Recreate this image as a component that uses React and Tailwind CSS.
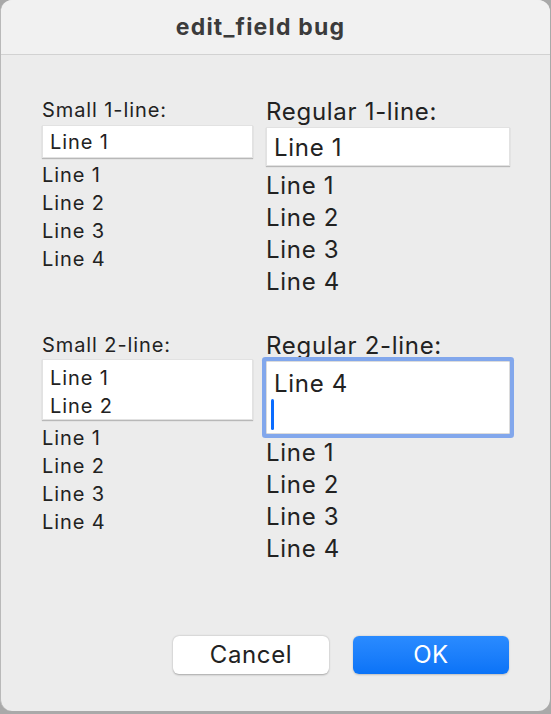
import React from 'react';

const font = { fontFamily: 'Inter, "Noto Sans", sans-serif' };

function SmallLines() {
  return (
    <div className="flex flex-col text-[20px] leading-[28px] tracking-[0.9px] text-[#222]">
      <span>Line 1</span>
      <span>Line 2</span>
      <span>Line 3</span>
      <span>Line 4</span>
    </div>
  );
}

function RegularLines() {
  return (
    <div className="flex flex-col text-[24px] leading-[32px] tracking-[0.7px] text-[#222]">
      <span>Line 1</span>
      <span>Line 2</span>
      <span>Line 3</span>
      <span>Line 4</span>
    </div>
  );
}

export default function App() {
  return (
    <div className="w-[551px] h-[714px] bg-[#a9a9a9]" style={font}>
      <div className="w-[550px] h-[711px] bg-[#ececec] rounded-[12px] border-l border-[#b9b9b9] overflow-hidden flex flex-col">
        {/* title bar */}
        <div className="h-[55px] shrink-0 bg-[#f1f1f1] border-b border-[#d2d2d2] flex items-center justify-center pr-[30px]">
          <span className="text-[23px] font-bold text-[#3b3b3b] tracking-[1.2px]">edit_field bug</span>
        </div>

        <div className="flex flex-col pl-[41px] pt-[41px]">
          {/* top row */}
          <div className="grid grid-cols-[211px_244px] gap-x-[13px] items-start h-[202px]">
            <div className="flex flex-col">
              <span className="text-[20px] leading-[28px] tracking-[0.9px] text-[#222]">Small 1-line:</span>
              <div className="mt-[1px] h-[33px] bg-white border border-[#e2e2e2] shadow-[0_1px_1px_rgba(0,0,0,0.22)] flex items-center pl-[7px] pt-[1px] text-[20px] tracking-[0.9px] text-[#222]">
                Line 1
              </div>
              <div className="mt-[3px]">
                <SmallLines />
              </div>
            </div>
            <div className="flex flex-col mt-[1px]">
              <span className="text-[24px] leading-[30px] tracking-[0.7px] text-[#222]">Regular 1-line:</span>
              <div className="h-[39px] bg-white border border-[#e2e2e2] shadow-[0_1px_1px_rgba(0,0,0,0.22)] flex items-center pl-[7px] pt-[3px] text-[24px] tracking-[0.7px] text-[#222]">
                Line 1
              </div>
              <div className="mt-[4px]">
                <RegularLines />
              </div>
            </div>
          </div>

          {/* bottom row */}
          <div className="grid grid-cols-[211px_244px] gap-x-[13px] items-start mt-[33px] h-[233px]">
            <div className="flex flex-col">
              <span className="text-[20px] leading-[28px] tracking-[0.9px] text-[#222]">Small 2-line:</span>
              <div className="h-[61px] bg-white border border-[#e2e2e2] shadow-[0_1px_1px_rgba(0,0,0,0.22)] flex flex-col pl-[7px] pt-[4px] text-[20px] leading-[28px] tracking-[0.9px] text-[#222]">
                <span>Line 1</span>
                <span>Line 2</span>
              </div>
              <div className="mt-[4px]">
                <SmallLines />
              </div>
            </div>
            <div className="flex flex-col">
              <span className="text-[24px] leading-[30px] tracking-[0.7px] text-[#222]">Regular 2-line:</span>
              <div className="h-[73px] bg-white rounded-[1px] border border-[#dcdcdc] ring-4 ring-[#82a7ec] flex flex-col pl-[7px] pt-[6px] text-[24px] leading-[32px] tracking-[0.7px] text-[#222]">
                <span>Line 4</span>
                <div className="ml-[-3px] -mt-[1px] w-[3px] h-[31px] rounded-full bg-[#0a6cff]" />
              </div>
              <div className="mt-[3px]">
                <RegularLines />
              </div>
            </div>
          </div>
        </div>

        {/* buttons */}
        <div className="flex justify-end gap-[24px] pr-[41px] mt-[72px]">
          <button className="w-[156px] h-[38px] rounded-[6px] bg-white shadow-[0_0.5px_2px_rgba(0,0,0,0.3)] text-[24px] tracking-[0.6px] text-[#222]">
            Cancel
          </button>
          <button className="w-[156px] h-[38px] rounded-[6px] bg-linear-to-b from-[#2a8bff] to-[#0a73f7] shadow-[0_0.5px_2px_rgba(0,0,0,0.2)] text-[24px] tracking-[0.6px] text-white">
            OK
          </button>
        </div>
      </div>
    </div>
  );
}
